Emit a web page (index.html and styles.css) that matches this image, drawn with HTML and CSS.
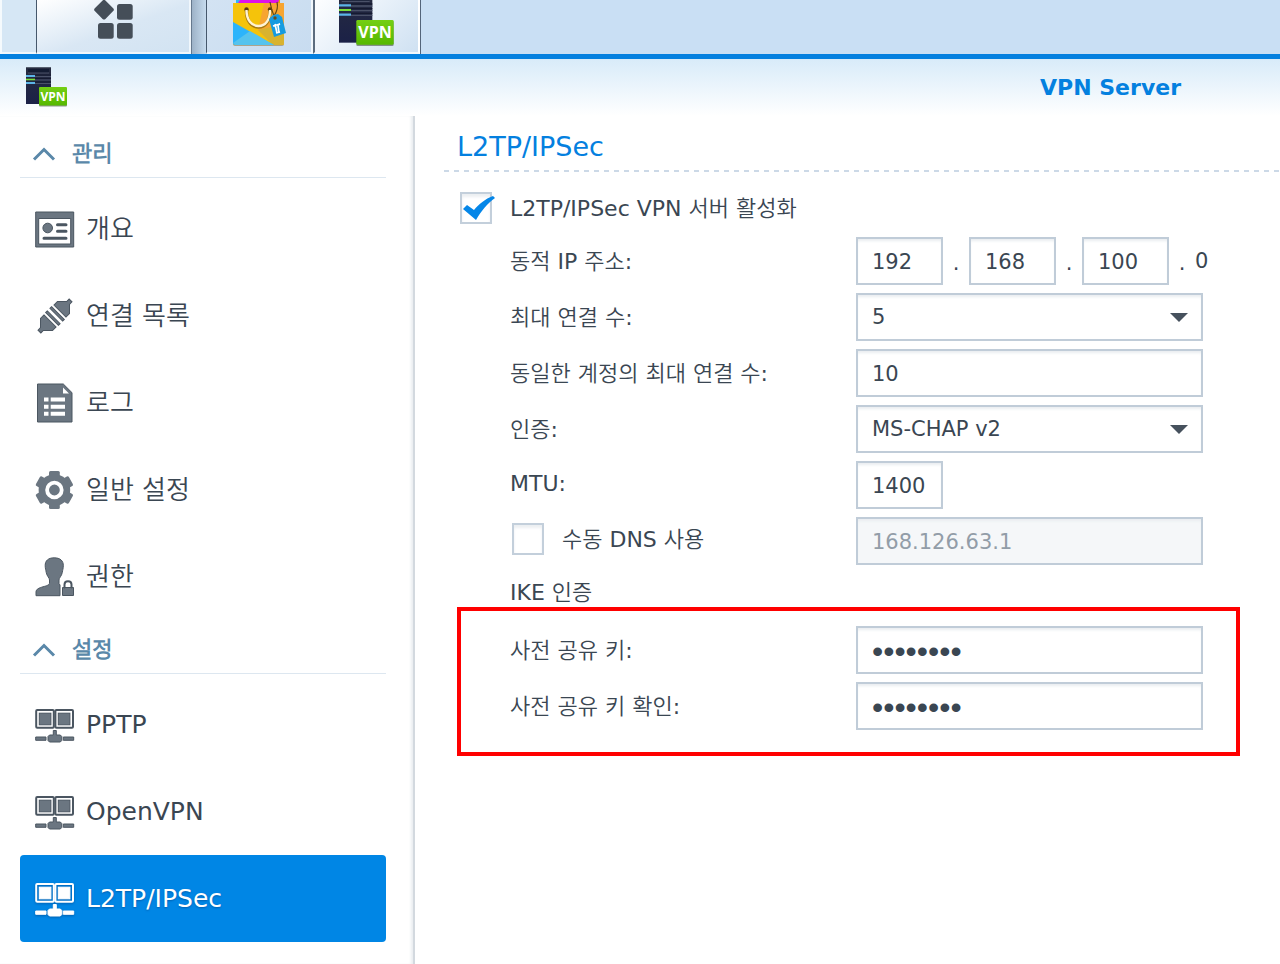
FILE: index.html
```html
<!DOCTYPE html>
<html lang="ko">
<head>
    <meta charset="UTF-8">
    <meta name="viewport" content="width=device-width, initial-scale=1.0">
    <title>VPN Server</title>
    <link rel="stylesheet" href="styles.css">
</head>
<body>
    <!-- Shared icons -->
    <svg class="sprite" aria-hidden="true">
        <defs>
            <linearGradient id="tower" x1="0" y1="0" x2="0" y2="1">
                <stop offset="0" stop-color="#272c40"/>
                <stop offset="1" stop-color="#1b2147"/>
            </linearGradient>
            <linearGradient id="badge" x1="0" y1="0" x2="0" y2="1">
                <stop offset="0" stop-color="#74cf14"/>
                <stop offset="1" stop-color="#55b800"/>
            </linearGradient>
        </defs>
        <symbol id="icon-vpn" viewBox="0 0 42 40">
            <rect x="0" y="0" width="25" height="37" fill="url(#tower)"/>
            <path d="M0 0h25v1H0z" fill="#56606f"/>
            <path d="M2 2h21v3l-1 1H3L2 5z" fill="#141c33"/>
            <path d="M2 6h21M9 9.500h16M9 13h16M9 16.500h16" stroke="#4a5168" stroke-width="1"/>
            <path d="M9 8h16M9 11.500h16M9 15h16" stroke="#151a30" stroke-width="1"/>
            <path d="M0 9h9M0 16h9" stroke="#5cb4e8" stroke-width="1.800"/>
            <path d="M0 12.500h9" stroke="#7be03a" stroke-width="1.600"/>
            <rect x="13" y="21" width="28" height="18.500" rx="1" fill="#39452f" opacity=".55"/>
            <rect x="13" y="20" width="28" height="18.500" rx="1" fill="url(#badge)"/>
        </symbol>
        <symbol id="icon-network" viewBox="0 0 40 40">
            <rect class="screen-frame" x="1.200" y="5" width="17.600" height="17.800" rx="1"/>
            <rect class="screen-frame" x="20.400" y="5" width="17.600" height="17.800" rx="1"/>
            <rect class="screen" x="4.300" y="8.200" width="11.600" height="11.600"/>
            <rect class="screen" x="23.300" y="8.200" width="11.600" height="11.600"/>
            <path class="solid" d="M18.300 25.500h3V30h4l1.500 1.500v4L25.300 37H14.500L13 35.500v-4l1.500-1.500h3.800z"/>
            <path class="solid" d="M.7 32H11v3.300H.7zM28.300 32h10.400v3.300H28.300z"/>
        </symbol>
    </svg>

    <nav class="taskbar" aria-label="작업 표시줄">
        <span class="task-edge"></span>
        <button class="task task-menu" type="button" aria-label="메인 메뉴">
            <svg width="40" height="42" viewBox="0 0 40 42" fill="#454e58">
                <rect x="2.500" y="3.200" width="15" height="15" rx="2" transform="rotate(45 10 10.700)"/>
                <rect x="23" y="5" width="15.700" height="15.700" rx="2.500"/>
                <rect x="4" y="24" width="15.700" height="15.700" rx="2.500"/>
                <rect x="23" y="24" width="15.700" height="15.700" rx="2.500"/>
            </svg>
        </button>
        <span class="task-gap"></span>
        <button class="task task-app" type="button" aria-label="패키지 센터">
            <svg width="54" height="48" viewBox="0 0 54 48">
                <path d="M4 0h44v5H4z" fill="#e8a400"/>
                <path d="M5 0h42l-1 3H6z" fill="#de12e8"/>
                <path d="M4 0h4L6 3H4z" fill="#31b6f2"/>
                <rect x="1" y="4" width="51" height="42" rx="2" fill="#8b6a28" opacity=".5"/>
                <path d="M1 3h51v40a2 2 0 0 1-2 2H3a2 2 0 0 1-2-2z" fill="#f5c30a"/>
                <path d="M32 3h20v40a2 2 0 0 1-2 2H42L26 30z" fill="#f7a531"/>
                <path d="M26 30l15 15h9a2 2 0 0 0 2-2V24z" fill="#d8b32f"/>
                <path d="M1 22l41 23H3a2 2 0 0 1-2-2z" fill="#2cb4fb"/>
                <path d="M1 43l17-12 24 14H3z" fill="#55c3ee"/>
                <circle cx="14.500" cy="9.500" r="2.200" fill="#5c3a08"/>
                <circle cx="38" cy="9.500" r="2.200" fill="#5c3a08"/>
                <path d="M14.500 11c0 10 5 16 12 16S38 21 38 11" fill="none" stroke="#a77b12" stroke-width="3.400"/>
                <path d="M14.500 10c0 10 5 16 12 16S38 20 38 10" fill="none" stroke="#fff3d4" stroke-width="2.400"/>
                <path d="M38 2c1 6 2 9 4 14 4-6 4-10 3-14" fill="none" stroke="#604812" stroke-width="1.200"/>
                <path d="M37 19l4-4 5-1 4 3 4 16-12 4z" fill="#169be0"/>
                <circle cx="43" cy="18" r="1.700" fill="#664d1b"/>
                <path d="M43 24l2 9M47 33l-1-8 2-1M41 26l7-2M44 33l4-1" stroke="#fff" stroke-width="1.700" fill="none"/>
            </svg>
        </button>
        <button class="task task-app task-active" type="button" aria-label="VPN Server">
            <svg class="task-vpn" width="56" height="54" viewBox="0 0 42 40">
                <use href="#icon-vpn" width="42" height="40"/>
                <text x="27" y="33.500" text-anchor="middle" class="vpn-text">VPN</text>
            </svg>
        </button>
    </nav>

    <header class="window-header">
        <svg width="42" height="40" viewBox="0 0 42 40">
            <use href="#icon-vpn" width="42" height="40"/>
            <text x="27" y="33.500" text-anchor="middle" class="vpn-text">VPN</text>
        </svg>
        <h1 class="window-title">VPN Server</h1>
    </header>

    <div class="window-body">
        <aside class="sidebar">
            <section>
                <h2 class="group-title">
                    <svg width="24" height="14" viewBox="0 0 24 14"><path d="M2 12.500L12 2.500l10 10"/></svg>
                    <span>관리</span>
                </h2>
                <a class="item" href="#overview">
                    <svg class="icon" viewBox="0 0 40 40">
                        <path class="solid" fill-rule="evenodd" d="M.7 3h38v35H.7zM3.700 9.500v25.500h32V9.500z"/>
                        <circle class="solid" cx="12.700" cy="19" r="4.800"/>
                        <path class="line" d="M22.500 15.700h8.500M22.500 22.300h8.500M9 29.300h22"/>
                    </svg>
                    <span>개요</span>
                </a>
                <a class="item" href="#connections">
                    <svg class="icon" viewBox="0 0 40 40">
                        <g transform="translate(20 20) rotate(-45)">
                            <path class="solid" d="M1.800-9h2.400V9H1.800zM7-8.500h5L17-3.500l1.500 1.500H22v4h-3.500L17 3.500 12 8.500H7z"/>
                            <path class="solid" d="M-1.800-9h-2.400V9h2.400zM-7-8.500h-5L-17-3.500l-1.500 1.500H-22v4h3.500L-17 3.500-12 8.500h5z"/>
                        </g>
                    </svg>
                    <span>연결 목록</span>
                </a>
                <a class="item" href="#log">
                    <svg class="icon" viewBox="0 0 40 40">
                        <path d="M2.500 1H28.300L37 9.700V39H2.500z" class="solid"/>
                        <path d="M28 4.500v6h6zM9 14.500v4h4.500v-4zM15.700 14.500v4H30v-4zM9 21.700v4h4.500v-4zM15.700 21.700v4H30v-4zM9 28.800v4h4.500v-4zM15.700 28.800v4H30v-4z" fill="#fff"/>
                    </svg>
                    <span>로그</span>
                </a>
                <a class="item" href="#general">
                    <svg class="icon" viewBox="0 0 40 40">
                        <g class="gear">
                            <circle cx="19.400" cy="20" r="15.800"/>
                            <rect x="14" y="1" width="10.800" height="38" rx="1.500"/>
                            <rect x="14" y="1" width="10.800" height="38" rx="1.500" transform="rotate(60 19.400 20)"/>
                            <rect x="14" y="1" width="10.800" height="38" rx="1.500" transform="rotate(120 19.400 20)"/>
                        </g>
                        <circle cx="19.400" cy="20" r="7.300" fill="none" stroke="#fff" stroke-width="3.800"/>
                    </svg>
                    <span>일반 설정</span>
                </a>
                <a class="item" href="#privilege">
                    <svg class="icon" viewBox="0 0 40 40">
                        <path class="solid" d="M19.200.8c6 0 9.300 3 9.100 8-.1 3-.6 4-1 6.500-.6 4-3.300 5.300-3.300 7.700v3.500l1 1.500v10.700H1V35c0-3 3.500-4.200 7-5.200 3.500-1 6.500-1.800 6.500-3.800v-3c0-2.400-2.700-3.700-3.300-7.700-.4-2.500-.9-3.500-1-6.500C10 3.800 13.200.8 19.200.8z"/>
                        <path class="solid" d="M27.500 30.500h11v8h-11z"/>
                        <path class="shackle" d="M29.500 30.500v-3c0-4.500 7-4.500 7 0v3"/>
                    </svg>
                    <span>권한</span>
                </a>
            </section>
            <section class="protocols">
                <h2 class="group-title">
                    <svg width="24" height="14" viewBox="0 0 24 14"><path d="M2 12.500L12 2.500l10 10"/></svg>
                    <span>설정</span>
                </h2>
                <a class="item" href="#pptp"><svg class="icon"><use href="#icon-network"/></svg>PPTP</a>
                <a class="item" href="#openvpn"><svg class="icon"><use href="#icon-network"/></svg>OpenVPN</a>
                <a class="item selected" href="#l2tp" aria-current="page"><svg class="icon"><use href="#icon-network"/></svg>L2TP/IPSec</a>
            </section>
        </aside>

        <main class="content">
            <h2 class="page-title">L2TP/IPSec</h2>
            <form class="settings">
                <div class="enable-row">
                    <input class="check" type="checkbox" id="enable" checked>
                    <label for="enable">L2TP/IPSec VPN 서버 활성화</label>
                </div>
                <div class="rows">
                    <div class="row">
                        <label for="ip1">동적 IP 주소:</label>
                        <div class="octets">
                            <input class="field short" type="text" id="ip1" value="192">
                            <span class="dot">.</span>
                            <input class="field short" type="text" value="168" aria-label="동적 IP 주소 2">
                            <span class="dot">.</span>
                            <input class="field short" type="text" value="100" aria-label="동적 IP 주소 3">
                            <span class="dot">.</span>
                            <span>0</span>
                        </div>
                    </div>
                    <div class="row">
                        <label for="max">최대 연결 수:</label>
                        <select class="field" id="max"><option>5</option></select>
                    </div>
                    <div class="row">
                        <label for="same">동일한 계정의 최대 연결 수:</label>
                        <input class="field" type="text" id="same" value="10">
                    </div>
                    <div class="row">
                        <label for="auth">인증:</label>
                        <select class="field" id="auth"><option>MS-CHAP v2</option></select>
                    </div>
                    <div class="row">
                        <label for="mtu">MTU:</label>
                        <input class="field short" type="text" id="mtu" value="1400">
                    </div>
                    <div class="row">
                        <div class="dns">
                            <input class="check" type="checkbox" id="dns">
                            <label for="dns">수동 DNS 사용</label>
                        </div>
                        <input class="field" type="text" value="168.126.63.1" aria-label="DNS" disabled>
                    </div>
                </div>
                <h3 class="sub-title">IKE 인증</h3>
                <div class="rows highlight">
                    <div class="row">
                        <label for="key">사전 공유 키:</label>
                        <input class="field" type="password" id="key" value="password">
                    </div>
                    <div class="row">
                        <label for="key2">사전 공유 키 확인:</label>
                        <input class="field" type="password" id="key2" value="password">
                    </div>
                </div>
            </form>
        </main>
    </div>
</body>
</html>
```

FILE: styles.css
```css
* {
    box-sizing: border-box;
}
body {
    margin: 0;
    min-height: 100vh;
    display: flex;
    flex-direction: column;
    background: #fff;
    color: #3a4652;
    font-family: Verdana, "DejaVu Sans", "Noto Sans CJK KR DemiLight", "Noto Sans CJK KR", sans-serif;
    font-size: 22px;
    overflow-x: hidden;
}
h1, h2, h3 {
    margin: 0;
    font-weight: normal;
}
svg {
    display: block;
    flex: none;
}
.sprite {
    position: absolute;
    width: 0;
    height: 0;
}
.vpn-text {
    font: 700 12px "Open Sans", sans-serif;
    fill: #fff;
}

/* Taskbar */
.taskbar {
    display: flex;
    height: 59px;
    background: #c9dff4;
    border-bottom: 5px solid #0480df;
    overflow: hidden;
}
.task-edge {
    width: 36px;
    background: #d6e7f5;
    border-left: 2px solid #f5fafd;
    box-shadow: inset 0 -2px #f1f7fc;
}
.task {
    display: flex;
    justify-content: center;
    align-items: flex-start;
    padding: 0;
    border: 2px solid #f1f7fc;
    border-top: 0;
    border-left: 1px solid #46586c;
}
.task-menu {
    width: 155px;
    padding-left: 2px;
    background: linear-gradient(160deg, #fff, #d9e7f4 55%, #d2e3f2);
}
.task-menu svg {
    margin-top: -1px;
}
.task-gap {
    width: 15px;
    border-left: 1px solid #66798e;
    background: linear-gradient(90deg, #9db2c7, #c6dbee);
}
.task-app {
    width: 107px;
    background: linear-gradient(135deg, #d3e3f3, #c8dcf0);
}
.task-active {
    border-left: 2px solid #5c6c7e;
    border-right-color: #fff;
    background: linear-gradient(135deg, #fdfeff, #cfe1f2);
    box-shadow: 1px 0 #53657a;
}
.task-vpn {
    margin-top: -7px;
}

/* Window */
.window-header {
    display: flex;
    justify-content: space-between;
    align-items: flex-start;
    height: 57px;
    padding: 8px 99px 0 26px;
    background: linear-gradient(#d8ebf9, #fff);
}
.window-title {
    color: #0480df;
    font-size: 22px;
    line-height: 42px;
    font-weight: bold;
}
.window-body {
    display: flex;
    flex: 1;
}

/* Sidebar */
.sidebar {
    flex: none;
    width: 415px;
    padding: 8px 27px 22px 20px;
    border-right: 2px solid #d3d9df;
    box-shadow: inset -3px 0 3px -1px #e9edf0;
}
.group-title {
    display: flex;
    align-items: center;
    gap: 16px;
    height: 54px;
    margin-bottom: 7px;
    padding: 7px 12px 0;
    border-bottom: 1px solid #dde7f0;
    color: #5a88a9;
    font-size: 22px;
    font-weight: bold;
}
.group-title svg {
    fill: none;
    stroke: #5a88a9;
    stroke-width: 3;
}
.group-title span {
    padding-bottom: 6px;
}
.item {
    display: flex;
    align-items: center;
    gap: 11px;
    height: 87px;
    padding-left: 15px;
    border-radius: 4px;
    color: #3a4652;
    font-size: 26px;
    text-decoration: none;
}
.item span {
    padding-bottom: 4px;
}
.protocols .item {
    font-size: 25px;
}
.icon {
    width: 40px;
    height: 40px;
    color: #6b7681;
}
.solid, .gear, .screen {
    fill: currentColor;
}
.solid, .screen, .screen-frame {
    stroke: var(--edge, #4b5661);
    stroke-width: 1;
}
.screen-frame {
    fill: none;
    stroke-width: 2;
}
.line, .shackle {
    fill: none;
    stroke: #4b5661;
    stroke-width: 3;
    stroke-linecap: round;
}
.shackle {
    stroke-width: 2;
}
.selected {
    background: #0086e5;
    color: #fff;
    text-shadow: 0 1px 2px #0060b0;
}
.selected .icon {
    color: #fff;
    --edge: #fff;
    filter: drop-shadow(0 1px 1px #0060b0);
}

/* Content */
.content {
    flex: 1;
    min-width: 0;
    padding-left: 29px;
}
.page-title {
    height: 56px;
    padding: 11px 13px 0;
    color: #0480df;
    font-size: 27px;
    line-height: 40px;
    background: repeating-linear-gradient(90deg, #ccd9e7 0 5px, #fff 5px 10px) bottom / 100% 2px no-repeat;
}
.settings {
    max-width: 796px;
    padding-left: 13px;
}
.enable-row, .dns {
    display: flex;
    align-items: center;
    gap: 18px;
}
.enable-row {
    height: 31px;
    margin: 20px 0 14px 3px;
}
.dns {
    padding: 0 0 4px 2px;
}
.check {
    appearance: none;
    position: relative;
    width: 32px;
    height: 32px;
    margin: 0;
    border: 2px solid #c3cfdb;
    background: #fff;
    box-shadow: inset 0 3px 3px #eceff2;
}
.check:checked::after {
    content: "";
    position: absolute;
    left: 0;
    top: 0;
    width: 34px;
    height: 28px;
    background: url("data:image/svg+xml,%3Csvg xmlns='http://www.w3.org/2000/svg' viewBox='0 0 34 28'%3E%3Cpath d='M1 15l4-4 7 5C17 10 23 5 31 2l2 2C26 9 19 17 14 26z' fill='%230486e8'/%3E%3C/svg%3E");
}
label {
    padding-bottom: 4px;
}
.rows {
    display: flex;
    flex-direction: column;
    gap: 8px;
    padding-left: 53px;
}
.row {
    display: grid;
    grid-template-columns: 346px 347px;
    align-items: center;
    height: 48px;
}
.field {
    width: 100%;
    height: 48px;
    padding: 2px 14px 0;
    border: 2px solid #c0ccd8;
    border-radius: 0;
    background: #fff;
    box-shadow: inset 0 3px 3px -1px #e9edf0;
    color: #3a4652;
    font-family: inherit;
    font-size: 21px;
}
.field:disabled {
    background: #f5f7f9;
    color: #929da8;
}
select.field {
    appearance: none;
    padding-top: 0;
    background: #fff url("data:image/svg+xml,%3Csvg xmlns='http://www.w3.org/2000/svg' width='18' height='9'%3E%3Cpath d='M0 0h18L9 9z' fill='%2346515d'/%3E%3C/svg%3E") right 13px center no-repeat;
}
.field[type="password"] {
    font-family: "Liberation Sans", sans-serif;
    font-size: 32px;
}
.field.short {
    flex: none;
    width: 87px;
}
.octets {
    display: flex;
    align-items: center;
    font-size: 21px;
}
.dot {
    flex: none;
    width: 26px;
    padding-top: 3px;
    text-align: center;
}
.sub-title {
    height: 42px;
    padding: 14px 53px 0;
    font-size: 22px;
    line-height: 28px;
}
.highlight {
    padding: 15px 0 22px 49px;
    border: 4px solid #f00;
}
```
